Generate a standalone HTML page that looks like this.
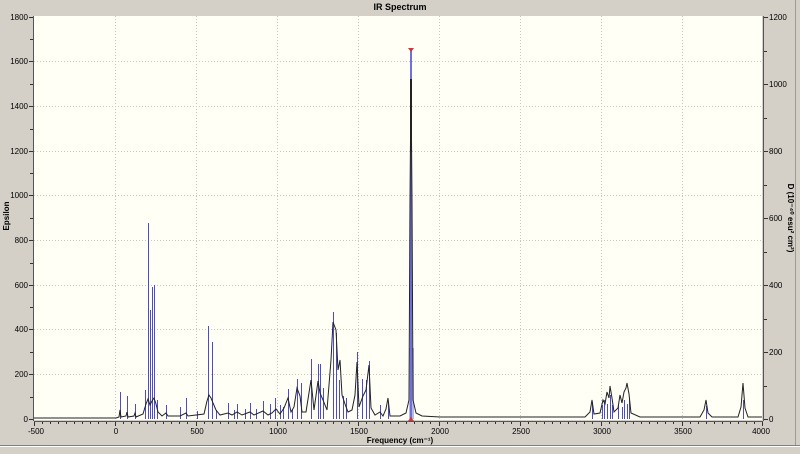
<!DOCTYPE html>
<html><head><style>
html,body{margin:0;padding:0;background:#d4d0c8;width:800px;height:454px;overflow:hidden}
svg{display:block}
text{font-family:"Liberation Sans",sans-serif;font-size:8px;fill:#000}
</style></head><body>
<svg width="800" height="454" viewBox="0 0 800 454" xmlns="http://www.w3.org/2000/svg">
<rect x="0" y="0" width="800" height="454" fill="#d4d0c8"/>
<line x1="795.5" y1="0" x2="795.5" y2="445" stroke="#a09c94"/>
<line x1="0" y1="445.5" x2="800" y2="445.5" stroke="#808080"/>
<line x1="0" y1="446.5" x2="800" y2="446.5" stroke="#fff"/>
<text x="400" y="10" text-anchor="middle" style="font-weight:bold;font-size:9px">IR Spectrum</text>
<rect x="34" y="16" width="728" height="404" fill="#fffff6"/>
<g stroke="#c8c8c0" stroke-dasharray="1,2" stroke-width="1">
<line x1="115.5" y1="16" x2="115.5" y2="420"/><line x1="196.5" y1="16" x2="196.5" y2="420"/>
<line x1="277.5" y1="16" x2="277.5" y2="420"/><line x1="358.5" y1="16" x2="358.5" y2="420"/>
<line x1="439.5" y1="16" x2="439.5" y2="420"/><line x1="520.5" y1="16" x2="520.5" y2="420"/>
<line x1="601.5" y1="16" x2="601.5" y2="420"/><line x1="682.5" y1="16" x2="682.5" y2="420"/>
<line x1="34" y1="61.5" x2="762" y2="61.5"/><line x1="34" y1="106.5" x2="762" y2="106.5"/>
<line x1="34" y1="151.5" x2="762" y2="151.5"/><line x1="34" y1="195.5" x2="762" y2="195.5"/>
<line x1="34" y1="240.5" x2="762" y2="240.5"/><line x1="34" y1="285.5" x2="762" y2="285.5"/>
<line x1="34" y1="329.5" x2="762" y2="329.5"/><line x1="34" y1="374.5" x2="762" y2="374.5"/>
</g>
<g stroke="#555" fill="none">
<line x1="33.5" y1="16" x2="33.5" y2="421"/>
<line x1="34" y1="421.5" x2="763" y2="421.5"/>
<line x1="763.5" y1="16" x2="763.5" y2="421"/>
</g>
<g stroke="#333">
<line x1="29" y1="17.5" x2="33" y2="17.5"/><line x1="30" y1="39.5" x2="33" y2="39.5"/>
<line x1="29" y1="61.5" x2="33" y2="61.5"/><line x1="30" y1="84.5" x2="33" y2="84.5"/>
<line x1="29" y1="106.5" x2="33" y2="106.5"/><line x1="30" y1="129.5" x2="33" y2="129.5"/>
<line x1="29" y1="151.5" x2="33" y2="151.5"/><line x1="30" y1="173.5" x2="33" y2="173.5"/>
<line x1="29" y1="195.5" x2="33" y2="195.5"/><line x1="30" y1="218.5" x2="33" y2="218.5"/>
<line x1="29" y1="240.5" x2="33" y2="240.5"/><line x1="30" y1="263.5" x2="33" y2="263.5"/>
<line x1="29" y1="285.5" x2="33" y2="285.5"/><line x1="30" y1="307.5" x2="33" y2="307.5"/>
<line x1="29" y1="329.5" x2="33" y2="329.5"/><line x1="30" y1="352.5" x2="33" y2="352.5"/>
<line x1="29" y1="374.5" x2="33" y2="374.5"/><line x1="30" y1="397.5" x2="33" y2="397.5"/>
<line x1="29" y1="419.5" x2="33" y2="419.5"/>
<line x1="764" y1="17.5" x2="768" y2="17.5"/><line x1="764" y1="51.5" x2="767" y2="51.5"/>
<line x1="764" y1="84.5" x2="768" y2="84.5"/><line x1="764" y1="118.5" x2="767" y2="118.5"/>
<line x1="764" y1="151.5" x2="768" y2="151.5"/><line x1="764" y1="185.5" x2="767" y2="185.5"/>
<line x1="764" y1="218.5" x2="768" y2="218.5"/><line x1="764" y1="252.5" x2="767" y2="252.5"/>
<line x1="764" y1="285.5" x2="768" y2="285.5"/><line x1="764" y1="319.5" x2="767" y2="319.5"/>
<line x1="764" y1="352.5" x2="768" y2="352.5"/><line x1="764" y1="386.5" x2="767" y2="386.5"/>
<line x1="764" y1="419.5" x2="768" y2="419.5"/>
</g>
<g stroke="#333">
<path d="M34.5 422v4M115.5 422v4M196.5 422v4M277.5 422v4M358.5 422v4M439.5 422v4M520.5 422v4M601.5 422v4M682.5 422v4M762.5 422v4"/>
<path d="M42.5 422v2M50.5 422v2M58.5 422v2M66.5 422v2M74.5 422v2M82.5 422v2M90.5 422v2M98.5 422v2M106.5 422v2M123.5 422v2M131.5 422v2M139.5 422v2M147.5 422v2M155.5 422v2M163.5 422v2M171.5 422v2M179.5 422v2M187.5 422v2M204.5 422v2M212.5 422v2M220.5 422v2M228.5 422v2M236.5 422v2M244.5 422v2M252.5 422v2M260.5 422v2M268.5 422v2M285.5 422v2M293.5 422v2M301.5 422v2M309.5 422v2M317.5 422v2M325.5 422v2M333.5 422v2M341.5 422v2M349.5 422v2M366.5 422v2M374.5 422v2M382.5 422v2M390.5 422v2M398.5 422v2M406.5 422v2M414.5 422v2M422.5 422v2M430.5 422v2M447.5 422v2M455.5 422v2M463.5 422v2M471.5 422v2M479.5 422v2M487.5 422v2M495.5 422v2M503.5 422v2M511.5 422v2M528.5 422v2M536.5 422v2M544.5 422v2M552.5 422v2M560.5 422v2M568.5 422v2M576.5 422v2M584.5 422v2M592.5 422v2M609.5 422v2M617.5 422v2M625.5 422v2M633.5 422v2M641.5 422v2M649.5 422v2M657.5 422v2M665.5 422v2M673.5 422v2M690.5 422v2M698.5 422v2M706.5 422v2M714.5 422v2M722.5 422v2M730.5 422v2M738.5 422v2M746.5 422v2M754.5 422v2"/>
</g>
<g text-anchor="end">
<text x="28" y="20">1800</text><text x="28" y="64">1600</text><text x="28" y="109">1400</text>
<text x="28" y="154">1200</text><text x="28" y="198">1000</text><text x="28" y="243">800</text>
<text x="28" y="288">600</text><text x="28" y="332">400</text><text x="28" y="377">200</text>
<text x="28" y="422">0</text>
</g>
<g>
<text x="769" y="20">1200</text><text x="769" y="87">1000</text><text x="769" y="154">800</text>
<text x="769" y="221">600</text><text x="769" y="288">400</text><text x="769" y="355">200</text>
<text x="769" y="422">0</text>
</g>
<g text-anchor="middle">
<text x="36" y="434">-500</text><text x="116" y="434">0</text><text x="197" y="434">500</text>
<text x="278" y="434">1000</text><text x="359" y="434">1500</text><text x="440" y="434">2000</text>
<text x="521" y="434">2500</text><text x="602" y="434">3000</text><text x="683" y="434">3500</text>
<text x="761" y="434">4000</text>
</g>
<text x="400" y="443" text-anchor="middle" style="font-weight:bold">Frequency (cm⁻¹)</text>
<text transform="translate(9,216) rotate(-90)" text-anchor="middle" style="font-weight:bold">Epsilon</text>
<text transform="translate(788,218) rotate(90)" text-anchor="middle" style="font-weight:bold">D (10⁻⁴⁰ esu² cm²)</text>
<g stroke="#4a4ad4" stroke-width="1" transform="translate(0.5,0)">
<path d="M120 419V392M127 419V396M135 419V404M145 419V390M148 419V223M150 419V310M152 419V287M154 419V285M157 419V400M166 419V405M180 419V407M186 419V398M197 419V411M208 419V326M212 419V342M216 419V410M228 419V403M234 419V410M237 419V404M245 419V409M250 419V403M256 419V409M263 419V401M270 419V404M275 419V398M280 419V405M283 419V407M288 419V389M292 419V410M297 419V379M301 419V383M311 419V359M318 419V364M320 419V364M323 419V388M333 419V312M336 419V333M339 419V380M343 419V396M346 419V398M357 419V352M362 419V379M366 419V380M369 419V361M380 419V405M388 419V402"/>
<path d="M592 419V402M602 419V405M604 419V400M607 419V404M610 419V395M612 419V405M618 419V405M622 419V407M624 419V400M627 419V404M629 419V398M706 419V406M743 419V400"/>
</g>
<rect x="409" y="348" width="5" height="71" fill="#b8b8e8"/>
<line x1="411" y1="419" x2="411" y2="50" stroke="#6f6fe0" stroke-width="2"/>
<polyline fill="none" stroke="#222" stroke-width="1" points="34,418 116,418 119,417 120,410 121,417 126,416 127,412 128,417 134,416 135,413 136,417 143,414 146,404 148,399 150,405 152,401 154,398 156,404 158,412 162,416 166,413 168,416 180,416 186,413 188,416 204,414 207,401 209,395 211,398 213,403 216,410 220,415 228,413 232,415 237,412 242,415 250,412 254,415 263,411 268,415 272,413 276,409 280,414 284,408 288,398 291,412 294,407 297,388 300,396 302,412 306,412 311,380 314,410 318,381 320,393 323,400 327,410 331,360 333,322 336,330 338,370 340,360 342,395 345,404 348,412 352,410 355,395 357,362 359,407 363,396 366,390 369,365 371,408 375,415 380,412 383,416 386,409 388,398 390,416 400,416 406,413 409,400 410,200 411,79 412,200 413,400 416,413 422,416 440,417 585,417 590,412 592,400 594,414 600,413 603,400 605,404 607,392 609,398 610,386 612,398 614,412 618,408 620,395 622,403 624,392 626,388 627,383 629,394 631,413 640,417 700,417 704,410 706,400 708,413 712,417 738,417 741,407 743,383 745,408 748,417 762,417"/>
<rect x="410" y="79" width="2" height="72" fill="#222"/>
<path d="M408 48h6l-3 4z" fill="#e03030"/>
<path d="M408 421h6l-3 -4z" fill="#e03030"/>
</svg>
</body></html>
